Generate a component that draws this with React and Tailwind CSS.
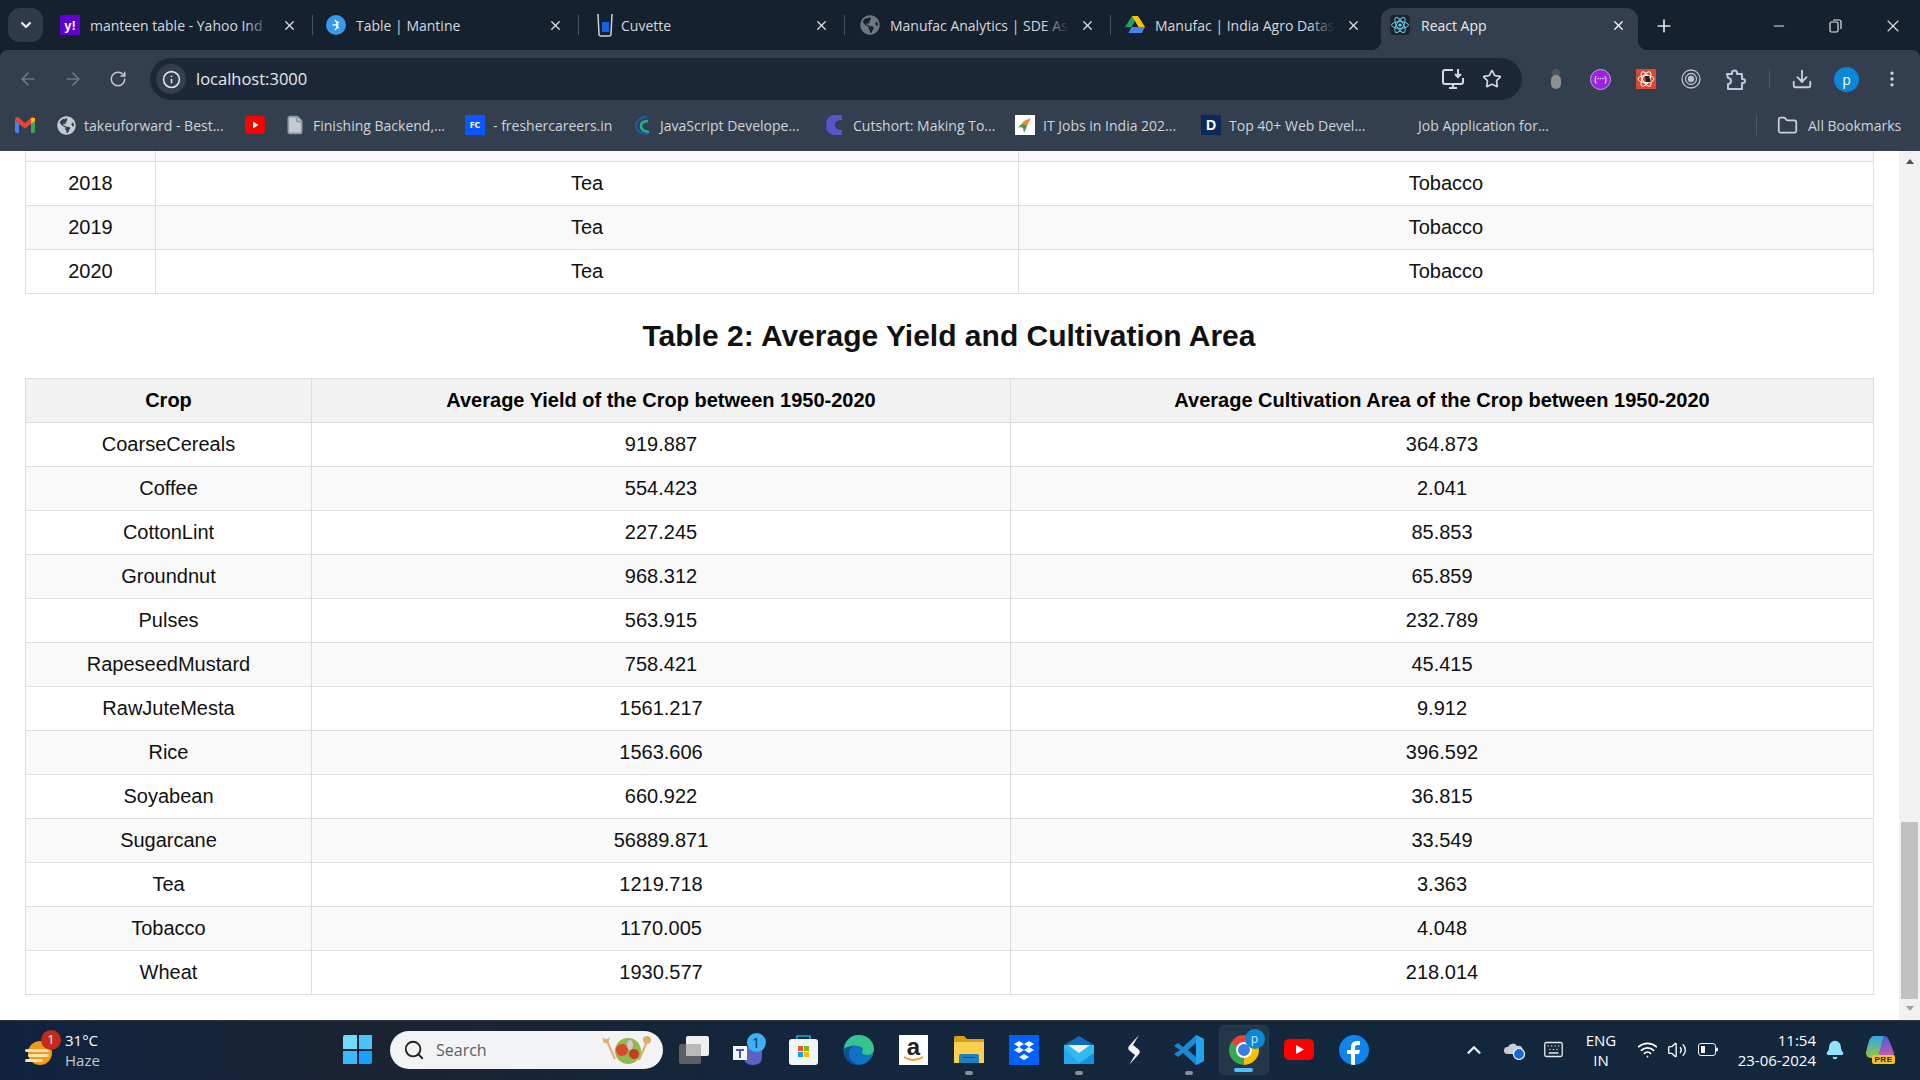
import {
  ArrowLeft, ArrowRight, RotateCw, Info, Star, Download, EllipsisVertical, Folder, Plus, X, Minus,
  ChevronDown, ChevronUp, Search, Wifi, Volume2, Bell, Keyboard, File,
} from 'lucide-react';
import { FaGlobeAmericas } from 'react-icons/fa';

const yearRows = [
  ['2018', 'Tea', 'Tobacco'],
  ['2019', 'Tea', 'Tobacco'],
  ['2020', 'Tea', 'Tobacco'],
];

const cropRows = [
  ['CoarseCereals', '919.887', '364.873'],
  ['Coffee', '554.423', '2.041'],
  ['CottonLint', '227.245', '85.853'],
  ['Groundnut', '968.312', '65.859'],
  ['Pulses', '563.915', '232.789'],
  ['RapeseedMustard', '758.421', '45.415'],
  ['RawJuteMesta', '1561.217', '9.912'],
  ['Rice', '1563.606', '396.592'],
  ['Soyabean', '660.922', '36.815'],
  ['Sugarcane', '56889.871', '33.549'],
  ['Tea', '1219.718', '3.363'],
  ['Tobacco', '1170.005', '4.048'],
  ['Wheat', '1930.577', '218.014'],
];

// favicons
const YahooIcon = () => (
  <div className="w-5 h-5 bg-[#6001d2] flex items-center justify-center text-white font-bold text-[13px] leading-none font-['Liberation_Sans',sans-serif]">y!</div>
);
const MantineIcon = () => (
  <svg width="20" height="20" viewBox="0 0 20 20"><circle cx="10" cy="10" r="10" fill="#339af0" /><path d="M9 5c3 2.500 3 7.500 0 10M6.500 10h6M11 7.500h2M11 12.500h2" stroke="#fff" strokeWidth="1.400" fill="none" /></svg>
);
const CuvetteIcon = () => (
  <svg width="18" height="24" viewBox="0 0 18 24"><path d="M2 1l1 20q0 2 2 2h8q2 0 2-2l1-20" stroke="#c9d0da" strokeWidth="1.500" fill="none" /><rect x="6" y="9" width="7" height="10" fill="#1565e0" /></svg>
);
const DriveIcon = () => (
  <svg width="20" height="20" viewBox="0 0 20 20"><path d="M7 1h6l-6.500 11H0z" fill="#1fa463" /><path d="M13 1l7 11h-6.500L7 1z" fill="#ffc107" /><path d="M3.500 18L6.500 12H20l-3.200 6z" fill="#4285f4" /></svg>
);
const ReactIcon = () => (
  <div className="w-5 h-5 rounded-sm bg-[#20232a] flex items-center justify-center">
    <svg width="20" height="20" viewBox="-10 -10 20 20" fill="none" stroke="#61dafb" strokeWidth="0.900">
      <ellipse rx="8.500" ry="3.400" />
      <ellipse rx="8.500" ry="3.400" transform="rotate(60)" />
      <ellipse rx="8.500" ry="3.400" transform="rotate(120)" />
      <circle r="1.600" fill="#61dafb" stroke="none" />
    </svg>
  </div>
);
const GmailIcon = () => (
  <svg width="20" height="16" viewBox="0 0 20 16"><path d="M0 3v11q0 2 2 2h2V7z" fill="#4285f4" /><path d="M20 3v11q0 2-2 2h-2V7z" fill="#34a853" /><path d="M0 3q0-3 3-3l7 6 7-6q3 0 3 3l-4 4-6 4.500L4 7z" fill="#ea4335" /><path d="M16 1l4 0v3l-4 3z" fill="#fbbc04" /></svg>
);
const YtSmall = () => (
  <svg width="20" height="20" viewBox="0 0 20 20"><rect y="1" width="20" height="18" rx="4" fill="#f00" /><path d="M8 6.500l5.500 3.500L8 13.500z" fill="#fff" /></svg>
);
const JsIcon = () => (
  <svg width="18" height="22" viewBox="0 0 18 22" fill="none"><path d="M14 2Q3 5 3 12t12 8" stroke="#1a5fb4" strokeWidth="2" /><path d="M15 7q-7 0-7 5t8 6" stroke="#1fb58f" strokeWidth="2.500" /></svg>
);
const CutshortIcon = () => (
  <svg width="18" height="22" viewBox="0 0 18 22"><path d="M16 1v5q-7 0-7 5t7 5v5H8Q0 20 0 11T8 1z" fill="#5a54c9" /></svg>
);
const ItJobsIcon = () => (
  <svg width="20" height="20" viewBox="0 0 20 20"><rect width="20" height="20" fill="#fff" /><path d="M3 13l6-7 7-3-4 8z" fill="#e98b3a" /><path d="M4 11l4 2 1 5 3-7-4-2z" fill="#4c9a3c" /></svg>
);

const tabs = [
  { icon: <YahooIcon />, label: 'manteen table - Yahoo Ind', pad: 'pl-[9px]', gap: 'ml-[10px]', fade: true },
  { icon: <MantineIcon />, label: 'Table | Mantine', pad: 'pl-[9px]', gap: 'ml-[10px]' },
  { icon: <CuvetteIcon />, label: 'Cuvette', pad: 'pl-[12px]', gap: 'ml-[6px]' },
  { icon: <FaGlobeAmericas size={20} color="#6f7681" />, label: 'Manufac Analytics | SDE As', pad: 'pl-[11px]', gap: 'ml-[10px]', fade: true },
  { icon: <DriveIcon />, label: 'Manufac | India Agro Datas', pad: 'pl-[10px]', gap: 'ml-[10px]', fade: true },
];

const bookmarks = [
  { w: 'w-[41px]', icon: <GmailIcon /> },
  { w: 'w-[189px]', icon: <FaGlobeAmericas size={19} color="#c6cbd3" />, label: 'takeuforward - Best...' },
  { w: 'w-[40px]', icon: <YtSmall /> },
  { w: 'w-[180px]', icon: <File size={20} fill="#c6cbd3" stroke="#8f98a5" />, label: 'Finishing Backend,...' },
  { w: 'w-[167px]', icon: <div className="w-5 h-5 bg-[#0a56ff] text-white text-[9px] font-bold flex items-center justify-center">FC</div>, label: '- freshercareers.in' },
  { w: 'w-[193px]', icon: <JsIcon />, label: 'JavaScript Develope...' },
  { w: 'w-[190px]', icon: <CutshortIcon />, label: 'Cutshort: Making To...' },
  { w: 'w-[186px]', icon: <ItJobsIcon />, label: 'IT Jobs in India 202...' },
  { w: 'w-[217px]', icon: <div className="w-5 h-5 bg-[#0b2a5b] text-white text-[14px] font-bold flex items-center justify-center font-['Liberation_Sans',sans-serif]">D</div>, label: 'Top 40+ Web Devel...' },
];

// taskbar icons
const Windows = () => (
  <div className="grid grid-cols-2 gap-[2px] w-[29px] h-[29px]">
    <div className="bg-[#6fdcfd] rounded-tl-[2px]" />
    <div className="bg-[#49c4fb]" />
    <div className="bg-[#3cb8fb]" />
    <div className="bg-[#17a0fd] rounded-br-[2px]" />
  </div>
);
const TaskView = () => (
  <svg width="30" height="28" viewBox="0 0 30 28"><rect y="8" width="22" height="20" rx="2" fill="#5d6063" /><rect x="7" width="23" height="20" rx="2" fill="#f0f0f0" /><rect x="7" y="8" width="15" height="12" fill="#b9b9b9" /></svg>
);
const Teams = () => (
  <div className="relative w-[34px] h-[34px]">
    <svg width="34" height="34" viewBox="0 0 34 34"><path d="M12 14h18v10q0 8-9 8-9 0-9-8z" fill="#5a62c4" /><circle cx="27" cy="11" r="5" fill="#7b83eb" /><rect x="1" y="13" width="14" height="14" fill="#f5f5fb" /><path d="M4 16h8v2h-3v7H7v-7H4z" fill="#4b53bc" /></svg>
    <div className="absolute top-0 right-0 w-[19px] h-[19px] rounded-full bg-[#3cb1f5] text-[#0d2440] text-[14px] flex items-center justify-center">1</div>
  </div>
);
const Store = () => (
  <svg width="29" height="30" viewBox="0 0 29 30"><path d="M8 5V1h13v4" fill="none" stroke="#1aa5e8" strokeWidth="1.600" /><rect y="4" width="29" height="26" rx="3" fill="#f4f5f6" /><rect x="9" y="11" width="5" height="5" fill="#f25022" /><rect x="15" y="11" width="5" height="5" fill="#7fba00" /><rect x="9" y="17" width="5" height="5" fill="#00a4ef" /><rect x="15" y="17" width="5" height="5" fill="#ffb900" /></svg>
);
const Edge = () => (
  <svg width="31" height="32" viewBox="0 0 31 32"><circle cx="15.500" cy="16" r="15" fill="#0f72c4" /><path d="M1 14C3 5 9 1 16 1c8 0 15 6 15 14 0 4-3 6-7 6-3 0-5-1-5-3 2-2 1-6-4-6-6 0-13 1-14 2z" fill="#35c58c" /><path d="M15 11c-6 0-9 4-9 9 0 5 4 10 10 11-9 1-15-6-15-15 3-3 9-5 14-5z" fill="#0b4f96" /></svg>
);
const Amazon = () => (
  <div className="relative w-[29px] h-[30px] bg-white flex justify-center">
    <span className="text-[#222] text-[24px] font-bold leading-[24px] font-['Liberation_Sans',sans-serif]">a</span>
    <svg className="absolute bottom-[2px] left-[4px]" width="21" height="7" viewBox="0 0 21 7"><path d="M1 1q9 6 19 0" fill="none" stroke="#f79c1d" strokeWidth="1.800" /></svg>
  </div>
);
const Explorer = () => (
  <svg width="30" height="27" viewBox="0 0 30 27"><path d="M0 2q0-2 2-2h8l3 3h17v24H0z" fill="#d69f14" /><rect y="6" width="30" height="21" rx="1" fill="#fbd04e" /><path d="M5 20q0-2 2-2h16q2 0 2 2v7H5z" fill="#1d7fc4" /><rect x="9" y="21" width="12" height="1" fill="#0d4f85" /></svg>
);
const Dropbox = () => (
  <svg width="30" height="30" viewBox="0 0 30 30"><rect width="30" height="30" fill="#0061ff" /><path d="M10 6l5 3-5 3-5-3zM20 6l5 3-5 3-5-3zM10 12l5 3-5 3-5-3zM20 12l5 3-5 3-5-3zM15 19l5 3-5 3-5-3z" fill="#fff" /></svg>
);
const Mail = () => (
  <svg width="30" height="28" viewBox="0 0 30 28"><path d="M0 9L15 0l15 9v5H0z" fill="#0f6cbd" /><rect y="9" width="30" height="19" fill="#2ebcef" /><path d="M0 28V12l16 16z" fill="#28a8ea" /><path d="M30 28V17L14 28z" fill="#1490df" /><path d="M4 9h22l-11 8z" fill="#f0f0f0" /></svg>
);
const Sublime = () => (
  <svg width="14" height="30" viewBox="0 0 14 30"><path d="M12 0L2 11Q0 14 3 16L8 20 2 30 12 19Q14 16 11 14L6 10Z" fill="#f4f4f4" /></svg>
);
const VsCode = () => (
  <svg width="30" height="30" viewBox="0 0 30 30"><path d="M22 0l8 4v22l-8 4-13-12-5 4-4-3 6-4-6-4 4-3 5 4z" fill="#1a8ad4" /><path d="M22 0l8 4v22l-8 4z" fill="#22a3ee" /><path d="M22 8l-8 7 8 7z" fill="#12283c" /></svg>
);
const Chrome = () => (
  <div className="relative w-[30px] h-[30px] rounded-full bg-[conic-gradient(#ea4335_0deg_60deg,#fbbc04_60deg_180deg,#34a853_180deg_300deg,#ea4335_300deg_360deg)] flex items-center justify-center">
    <div className="w-[16px] h-[16px] rounded-full bg-[#3a7be8] border-[2px] border-white" />
  </div>
);
const YtBig = () => (
  <svg width="30" height="21" viewBox="0 0 30 21"><rect width="30" height="21" rx="5" fill="#f00" /><path d="M12 6l8 4.500-8 4.500z" fill="#fff" /></svg>
);
const Facebook = () => (
  <div className="w-[30px] h-[30px] rounded-full bg-[#0f84ec] flex items-end justify-center overflow-hidden">
    <svg width="15" height="26" viewBox="0 0 15 26"><path d="M5 26V15H1v-4h4V8q0-6 6-6h3v4h-2q-3 0-3 2v3h5l-1 4H9v11z" fill="#fff" /></svg>
  </div>
);
const Weather = () => (
  <div className="relative w-[30px] h-[34px]">
    <svg className="absolute left-0 bottom-0" width="28" height="28" viewBox="0 0 28 28">
      <circle cx="15" cy="14" r="12" fill="#f59a12" />
      <rect y="10" width="24" height="3" rx="1.500" fill="#f5e2b8" />
      <rect x="3" y="15" width="21" height="3" rx="1.500" fill="#f5e2b8" />
      <rect y="20" width="18" height="3" rx="1.500" fill="#f5e2b8" />
    </svg>
    <div className="absolute -top-[3px] right-[-6px] w-[20px] h-[20px] rounded-full bg-[#c42b1c] text-white text-[13px] flex items-center justify-center">1</div>
  </div>
);
const Salad = () => (
  <svg width="52" height="32" viewBox="0 0 52 32">
    <path d="M5 5l9 20M47 5l-9 21" stroke="#e2ac6f" strokeWidth="2" />
    <circle cx="46" cy="6" r="4" fill="#e2ac6f" />
    <path d="M1 3l4 3 4-3-2 6H3z" fill="#e2ac6f" />
    <ellipse cx="27" cy="17" rx="13" ry="13" fill="#8fb94a" transform="rotate(20 27 17)" />
    <circle cx="21" cy="16" r="6" fill="#d9482f" />
    <circle cx="33" cy="20" r="5" fill="#c83a24" />
    <ellipse cx="29" cy="11" rx="3" ry="5" fill="#d9c4dc" />
  </svg>
);
const Copilot = () => (
  <div className="relative w-[30px] h-[30px]">
    <svg width="29" height="25" viewBox="0 0 29 25">
      <defs>
        <linearGradient id="cpA" x1="0" y1="0" x2="0" y2="1"><stop offset="0" stopColor="#2aa8e8" /><stop offset="1" stopColor="#9bc53d" /></linearGradient>
        <linearGradient id="cpB" x1="0" y1="0" x2="0" y2="1"><stop offset="0" stopColor="#4a58d8" /><stop offset="1" stopColor="#d85bb0" /></linearGradient>
      </defs>
      <path d="M8 1h10l-6 22H6q-6 0-6-5 1-6 3-12 2-5 5-5z" fill="url(#cpA)" />
      <path d="M18 1q4 0 5 4l5 13q0 5-5 5H12z" fill="url(#cpB)" />
    </svg>
    <div className="absolute left-[6px] top-[20px] w-[23px] h-[9px] rounded-[2px] bg-[#f9c21a] text-[#222] text-[8px] font-bold leading-[9px] text-center tracking-[0.5px] font-['Liberation_Sans',sans-serif]">PRE</div>
  </div>
);

function ChromeTab({ tab, last }) {
  return (
    <div className={`relative flex items-center w-[266px] h-[42px] pb-[8px] ${tab.pad}`}>
      <div className="w-5 flex justify-center shrink-0">{tab.icon}</div>
      <span className={`${tab.gap} whitespace-nowrap text-[14px] text-[#d4d8de]`}>{tab.label}</span>
      {tab.fade && <div className="absolute right-[46px] top-0 w-[26px] h-[34px] bg-gradient-to-r from-transparent to-[#16212f]" />}
      <X size={15} className="absolute right-[20px] text-[#dfe2e7]" />
      {!last && <div className="absolute right-[4px] w-px h-[20px] bg-[#4a5360]" />}
    </div>
  );
}

function Slot({ className, children }) {
  return <div className={`flex items-center justify-center shrink-0 ${className}`}>{children}</div>;
}

function TaskSlot({ dot, children }) {
  return (
    <div className="relative flex items-center justify-center w-[55px] h-[50px] shrink-0">
      {children}
      {dot && <div className="absolute bottom-[0px] w-[8px] h-[4px] rounded-full bg-[#8a9097]" />}
    </div>
  );
}

function DataTable({ widths, head, rows, strip }) {
  const cell = 'border border-[#dddddd] py-[10px] px-[10px] text-center';
  return (
    <table className="w-[1848px] table-fixed border-collapse text-[20px] leading-[23px] text-[#111]">
      <colgroup>
        {widths.map((w) => <col key={w} className={w} />)}
      </colgroup>
      {head && (
        <thead>
          <tr className="bg-[#f2f2f2]">
            {head.map((h) => <th key={h} className={`${cell} font-bold text-black`}>{h}</th>)}
          </tr>
        </thead>
      )}
      <tbody>
        {strip && (
          <tr className="bg-[#f9f9f9] h-[10px]">
            <td className="border-x border-b border-[#dddddd] p-0" />
            <td className="border-x border-b border-[#dddddd] p-0" />
            <td className="border-x border-b border-[#dddddd] p-0" />
          </tr>
        )}
        {rows.map((r, i) => (
          <tr key={r[0]} className={i % 2 === 1 ? 'bg-[#f9f9f9]' : 'bg-white'}>
            {r.map((c, j) => <td key={j} className={cell}>{c}</td>)}
          </tr>
        ))}
      </tbody>
    </table>
  );
}

export default function App() {
  return (
    <div className="flex flex-col w-[1920px] h-[1080px] overflow-hidden bg-white font-['Liberation_Sans',Arial,sans-serif]">
      {/* browser chrome */}
      <div className="h-[151px] shrink-0 bg-[#16212f] font-['Open_Sans',sans-serif]">
        <div className="flex items-end h-[50px]">
          <div className="self-start mt-[8px] ml-[8px] mr-[-5px] w-[35px] h-[34px] rounded-[12px] bg-[#2f3a4a] flex items-center justify-center shrink-0">
            <ChevronDown size={16} strokeWidth={3} className="text-white" />
          </div>
          <div className="flex ml-[13px]">
            {tabs.map((t, i) => <ChromeTab key={t.label} tab={t} last={i === 4} />)}
          </div>
          <div className="relative flex items-center w-[257px] h-[42px] pb-[8px] pl-[9px] bg-[#333e4f] rounded-t-[12px]">
            <span className="absolute -left-[10px] bottom-0 w-[10px] h-[10px] bg-[radial-gradient(circle_at_0_0,transparent_10px,#333e4f_10.5px)]" />
            <span className="absolute -right-[10px] bottom-0 w-[10px] h-[10px] bg-[radial-gradient(circle_at_100%_0,transparent_10px,#333e4f_10.5px)]" />
            <ReactIcon />
            <span className="ml-[11px] text-[14px] text-[#e8eaed]">React App</span>
            <X size={15} className="absolute right-[12px] text-white" />
          </div>
          <div className="self-start flex items-center h-[42px] mt-[5px]">
            <Plus size={20} className="ml-[16px] text-[#e3e5e8]" />
            <Minus size={16} strokeWidth={1.500} className="ml-[97px] text-[#e3e5e8]" />
            <svg className="ml-[42px]" width="13" height="14" viewBox="0 0 13 14" fill="none" stroke="#e3e5e8" strokeWidth="1.200"><rect x="1" y="3" width="8" height="10" rx="1.500" /><path d="M4 1h6q2 0 2 2v7" /></svg>
            <X size={20} strokeWidth={1.300} className="ml-[41px] text-[#e3e5e8]" />
          </div>
        </div>

        <div className="bg-[#333e4f] h-[101px] rounded-t-[8px]">
          <div className="flex items-center h-[50px] pt-[8px]">
            <Slot className="w-[45px] ml-[5px]"><ArrowLeft size={20} className="text-[#6d7685]" /></Slot>
            <Slot className="w-[45px]"><ArrowRight size={20} className="text-[#6d7685]" /></Slot>
            <Slot className="w-[45px]"><RotateCw size={18} className="text-[#c4c9d1]" /></Slot>
            <div className="flex items-center w-[1372px] h-[42px] ml-[10px] rounded-full bg-[#1c2737]">
              <div className="w-[30px] h-[30px] ml-[6px] rounded-full bg-[#333e4f] flex items-center justify-center">
                <Info size={19} className="text-[#e3e5e8]" />
              </div>
              <span className="ml-[10px] text-[16.5px] text-[#e8eaed]">localhost:3000</span>
              <div className="ml-auto flex items-center">
                <svg width="22" height="20" viewBox="0 0 22 20" fill="none" stroke="#d5d9df" strokeWidth="2"><path d="M11 1H3Q1 1 1 3v10q0 2 2 2h16q2 0 2-2V9M7 19h8M11 15v4" /><path d="M16 0v8M13 5l3 3 3-3" /></svg>
                <Star size={20} strokeWidth={2} className="ml-[18px] mr-[20px] text-[#d5d9df]" />
              </div>
            </div>
            <div className="flex items-center ml-[11px]">
              <Slot className="w-[45px]">
                <svg width="14" height="22" viewBox="0 0 14 22"><circle cx="7" cy="5" r="4" fill="#50545b" /><rect x="2" y="7" width="10" height="14" rx="5" fill="#8f9194" /></svg>
              </Slot>
              <Slot className="w-[45px]">
                <div className="w-[21px] h-[21px] rounded-full bg-[#9a22e0] border border-[#b9a5d4] text-[#eadcf8] text-[8px] font-bold flex items-center justify-center">(···)</div>
              </Slot>
              <Slot className="w-[45px]">
                <svg width="20" height="20" viewBox="-10 -10 20 20"><rect x="-10" y="-10" width="20" height="20" fill="#d9482f" /><g fill="none" stroke="#fff" strokeWidth="1"><ellipse rx="8" ry="3.500" /><ellipse rx="8" ry="3.500" transform="rotate(60)" /><ellipse rx="8" ry="3.500" transform="rotate(120)" /></g><path d="M-1-3h4l2 6h-5z" fill="#222" /></svg>
              </Slot>
              <Slot className="w-[45px]">
                <svg width="20" height="20" viewBox="0 0 20 20" fill="none" stroke="#bcc1c9" strokeWidth="1.300"><circle cx="10" cy="10" r="9" /><circle cx="10" cy="10" r="5.500" /><circle cx="10" cy="10" r="2.500" fill="#bcc1c9" /></svg>
              </Slot>
              <Slot className="w-[45px]">
                <svg width="21" height="21" viewBox="0 0 21 21" fill="none" stroke="#bcc8dc" strokeWidth="2" strokeLinejoin="round"><path d="M2 5h5V4a2.500 2.500 0 0 1 5 0v1h5v5h1a2 2 0 0 1 0 4h-1v6H3v-5a2.500 2.500 0 0 0 0-6z" /></svg>
              </Slot>
              <div className="w-px h-[20px] ml-[11px] mr-[10px] bg-[#4e5867]" />
              <Slot className="w-[44px]"><Download size={22} className="text-[#c9d0db]" /></Slot>
              <Slot className="w-[45px]">
                <div className="w-[25px] h-[25px] rounded-full bg-[#0b87d8] text-white text-[14px] flex items-center justify-center">p</div>
              </Slot>
              <Slot className="w-[45px]"><EllipsisVertical size={20} className="text-[#d5d9df]" /></Slot>
            </div>
          </div>

          <div className="flex items-center h-[50px] pl-[15px] text-[14px] text-[#d0d4da]">
            {bookmarks.map((b, i) => (
              <div key={i} className={`flex items-center shrink-0 whitespace-nowrap ${b.w}`}>
                <div className="w-5 flex justify-center shrink-0">{b.icon}</div>
                {b.label && <span className="ml-[8px]">{b.label}</span>}
              </div>
            ))}
            <span className="w-[338px] shrink-0">Job Application for...</span>
            <div className="w-px h-[20px] bg-[#4e5867] shrink-0" />
            <Folder size={21} className="ml-[20px] text-[#c9d0db] shrink-0" />
            <span className="ml-[10px] whitespace-nowrap">All Bookmarks</span>
          </div>
        </div>
      </div>

      {/* page */}
      <div className="flex flex-1 min-h-0">
        <div className="flex-1 pl-[25px]">
          <DataTable widths={['w-[130px]', 'w-[863px]', 'w-[855px]']} rows={yearRows} strip />
          <h2 className="h-[84px] w-[1848px] flex items-center justify-center text-[30px] font-bold text-[#111]">
            Table 2: Average Yield and Cultivation Area
          </h2>
          <DataTable
            widths={['w-[286px]', 'w-[699px]', 'w-[863px]']}
            head={['Crop', 'Average Yield of the Crop between 1950-2020', 'Average Cultivation Area of the Crop between 1950-2020']}
            rows={cropRows}
          />
        </div>
        <div className="flex flex-col items-center w-[21px] bg-[#f1f1f1]">
          <div className="mt-[8px] w-0 h-0 border-x-[4.5px] border-x-transparent border-b-[5px] border-b-[#505050]" />
          <div className="mt-auto w-[17px] h-[177px] bg-[#c1c1c1]" />
          <div className="mt-[7px] mb-[9px] w-0 h-0 border-x-[4.5px] border-x-transparent border-t-[5px] border-t-[#a3a3a3]" />
        </div>
      </div>

      {/* taskbar */}
      <div className="flex items-center h-[60px] pb-[2px] shrink-0 border-t border-[#2f3640] bg-[linear-gradient(90deg,#0f2340,#1b2332_20%,#13263d_40%,#13283c)] font-['Open_Sans',sans-serif] text-white">
        <div className="ml-[25px]"><Weather /></div>
        <div className="ml-[10px] w-[48px] text-[15px] leading-[20px]">
          <div>31°C</div>
          <div className="text-[#c5c9cf]">Haze</div>
        </div>
        <Slot className="ml-[230px] w-[29px]"><Windows /></Slot>
        <div className="flex items-center ml-[18px] w-[273px] h-[38px] pl-[13px] pr-[10px] rounded-full bg-[#f1f3f5] text-[#5a5e63] text-[16px]">
          <Search size={22} strokeWidth={2} className="text-[#222]" />
          <span className="ml-[11px]">Search</span>
          <div className="ml-auto"><Salad /></div>
        </div>
        <Slot className="w-[55px] ml-[3px]"><TaskView /></Slot>
        <Slot className="w-[55px]"><Teams /></Slot>
        <Slot className="w-[55px]"><Store /></Slot>
        <Slot className="w-[55px]"><Edge /></Slot>
        <Slot className="w-[55px]"><Amazon /></Slot>
        <TaskSlot dot><Explorer /></TaskSlot>
        <Slot className="w-[55px]"><Dropbox /></Slot>
        <TaskSlot dot><Mail /></TaskSlot>
        <Slot className="w-[55px]"><Sublime /></Slot>
        <TaskSlot dot><VsCode /></TaskSlot>
        <div className="relative flex items-center justify-center w-[50px] h-[50px] mx-[2.500px] rounded-[5px] bg-[#233749] border border-[#2a3e50]">
          <Chrome />
          <div className="absolute top-[3px] right-[3px] w-[20px] h-[20px] rounded-full bg-[#0b87d8] text-[#cfe8fa] text-[12px] flex items-center justify-center">p</div>
          <div className="absolute bottom-[2px] w-[19px] h-[4px] rounded-full bg-[#4cc2ff]" />
        </div>
        <Slot className="w-[55px]"><YtBig /></Slot>
        <Slot className="w-[55px]"><Facebook /></Slot>

        <ChevronUp size={22} strokeWidth={2.500} className="ml-[82px] text-[#f0f0f0]" />
        <svg className="ml-[19px]" width="21" height="20" viewBox="0 0 21 20"><path d="M3 14a3.500 3.500 0 0 1 1-7 5 5 0 0 1 9-1 4 4 0 0 1 3 8z" fill="#c9ced4" /><circle cx="15" cy="14" r="5.500" fill="#1668d8" stroke="#fff" strokeWidth="1.200" /></svg>
        <Keyboard size={21} strokeWidth={1.500} className="ml-[18px] text-[#e8eaed]" />
        <div className="ml-[20px] w-[34px] text-center text-[15px] leading-[20px]">
          <div>ENG</div>
          <div>IN</div>
        </div>
        <Wifi size={21} className="ml-[19px]" />
        <Volume2 size={20} strokeWidth={1.600} className="ml-[9px]" />
        <svg className="ml-[11px]" width="20" height="13" viewBox="0 0 20 13" fill="none"><rect x="0.500" y="0.500" width="17" height="12" rx="2.500" stroke="#f0f0f0" /><rect x="3" y="3" width="4" height="7" fill="#f0f0f0" /><rect x="18" y="4.500" width="2" height="4" rx="1" fill="#f0f0f0" /></svg>
        <div className="ml-[14px] w-[84px] text-right text-[15px] leading-[20px] whitespace-nowrap">
          <div>11:54</div>
          <div>23-06-2024</div>
        </div>
        <Bell size={20} fill="#8fe3ff" stroke="#8fe3ff" className="ml-[9px]" />
        <div className="ml-[21px]"><Copilot /></div>
      </div>
    </div>
  );
}
